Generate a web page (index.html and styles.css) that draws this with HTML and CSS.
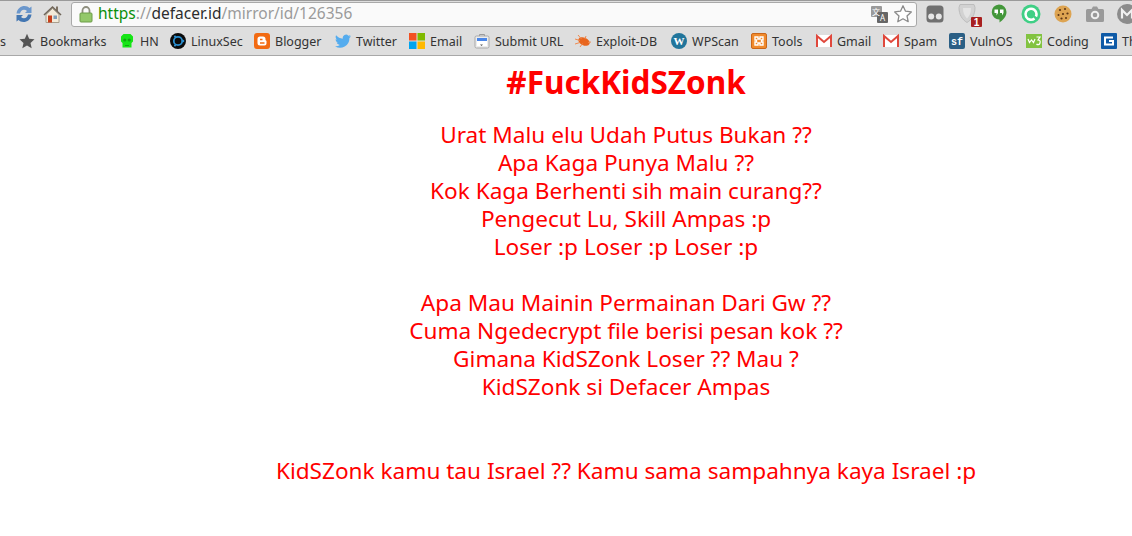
FILE: index.html
```html
<!DOCTYPE html>
<html lang="id">
<head>
  <meta charset="UTF-8" />
  <title>#FuckKidSZonk</title>
  <link rel="stylesheet" href="styles.css">
</head>
<body>
  <div class="toolbar">
    <span class="nav-btn">
      <svg width="18" height="18" viewBox="0 0 18 18">
        <path d="M1.500 8.500C2 3.500 6 1 9.500 1c2.200 0 3.800.8 5 2L16.500 1.500V8h-6.500l2-2c-.8-.8-1.800-1.200-3-1.200-2 0-3.500 1.400-4 3.700z" fill="#6b97cc"/>
        <path d="M16.500 9.500c-.5 5-4.500 7.500-8 7.500-2.200 0-3.800-.8-5-2L1.500 16.500V10H8l-2 2c.8.800 1.800 1.200 3 1.200 2 0 3.500-1.400 4-3.700z" fill="#4477b2"/>
      </svg>
    </span>
    <span class="nav-btn">
      <svg width="19" height="19" viewBox="0 0 19 19">
        <path d="M3 9.500V17.500h13V9.500L9.500 3.500z" fill="#f2ead9" stroke="#a89f8e"/>
        <rect x="13" y="1.500" width="2" height="4.500" fill="#7c7163"/>
        <path d="M1 10l8.500-8L18 10" fill="none" stroke="#6f6558" stroke-width="1.600"/>
        <rect x="5" y="10.500" width="4" height="7" fill="#c8401c"/>
        <rect x="10.500" y="10.500" width="3.500" height="3.500" fill="#7f9db8"/>
      </svg>
    </span>
    <div class="url-box">
      <svg class="lock" width="14" height="17" viewBox="0 0 14 17">
        <path d="M3.500 8V4.500a3.500 3.500 0 0 1 7 0V8" fill="none" stroke="#8f8f7f" stroke-width="1.800"/>
        <rect x="1" y="7" width="12" height="9" rx="1" fill="#93c86a" stroke="#6c9c48"/>
      </svg>
      <span class="url"><span class="url-https">https</span><span class="url-path">://</span><span class="url-host">defacer.id</span><span class="url-path">/mirror/id/126356</span></span>
      <svg class="translate" width="17" height="17" viewBox="0 0 17 17">
        <rect x="0" y="0" width="11" height="11" rx="1" fill="#9a9a9a"/>
        <rect x="6" y="6" width="11" height="11" rx="1" fill="#666"/>
        <text x="5" y="8.500" class="translate-zh">文</text>
        <text x="11.500" y="15" class="translate-a">A</text>
      </svg>
      <svg width="20" height="20" viewBox="0 0 20 20">
        <path d="M10 1.800l2.500 5.400 5.800.7-4.300 4 1.200 5.800L10 14.800l-5.200 2.900L6 11.900l-4.300-4 5.800-.7z" fill="#fff" stroke="#8a8a8a" stroke-width="1.300" stroke-linejoin="round"/>
      </svg>
    </div>
    <div class="extensions">
      <span class="ext-btn">
        <svg width="18" height="18" viewBox="0 0 18 18">
          <rect x="0.500" y="0.500" width="17" height="17" rx="3.500" fill="#707070"/>
          <circle cx="5.200" cy="11.500" r="3" fill="#e6e6e6"/>
          <circle cx="12.800" cy="11.500" r="3" fill="#e6e6e6"/>
        </svg>
      </span>
      <span class="ext-btn">
        <svg width="30" height="26" viewBox="0 0 30 26">
          <path d="M8 3.500h14l1 3c0 7-3 12-8 15-5-3-8-8-8-15z" fill="#d2d2d2" stroke="#bdbdbd"/>
          <path d="M11 7h8c0 5-1.500 8-4 10.500C12.500 15 11 12 11 7z" fill="#e4e4e4"/>
          <rect x="19" y="16" width="11" height="10" rx="1" fill="#a81f1f"/>
          <text x="24.500" y="25" class="ext-badge">1</text>
        </svg>
      </span>
      <span class="ext-btn">
        <svg width="16" height="20" viewBox="0 0 16 20">
          <path d="M8 0.500a7.500 7.500 0 0 1 7.500 7.500c0 4.500-3.500 8-7 10.500V15.500A7.500 7.500 0 0 1 8 .500z" fill="#43973a"/>
          <rect x="3.500" y="5.500" width="3.500" height="3.500" fill="#fff"/>
          <rect x="9" y="5.500" width="3.500" height="3.500" fill="#fff"/>
          <path d="M5.500 9h1.500l-1.500 2.500zM11 9h1.500L11 11.500z" fill="#fff"/>
        </svg>
      </span>
      <span class="ext-btn">
        <svg width="20" height="20" viewBox="0 0 20 20">
          <circle cx="10" cy="10" r="9.500" fill="#3fcf85"/>
          <path d="M13.500 14.500A5.500 5.500 0 1 1 15.500 10c0 1-.2 1.800-.6 2.500" fill="none" stroke="#fff" stroke-width="2.600"/>
        </svg>
      </span>
      <span class="ext-btn">
        <svg width="18" height="18" viewBox="0 0 18 18">
          <circle cx="9" cy="9" r="8.500" fill="#dda452"/>
          <circle cx="6" cy="5" r="1.100" fill="#5c3415"/>
          <circle cx="11" cy="4" r="1" fill="#5c3415"/>
          <circle cx="13.500" cy="8.500" r="1.100" fill="#5c3415"/>
          <circle cx="9" cy="9" r="1.100" fill="#5c3415"/>
          <circle cx="4.500" cy="10" r="1" fill="#5c3415"/>
          <circle cx="7.500" cy="13.500" r="1.100" fill="#5c3415"/>
          <circle cx="12" cy="13" r="1" fill="#5c3415"/>
        </svg>
      </span>
      <span class="ext-btn">
        <svg width="18" height="16" viewBox="0 0 18 16">
          <path d="M1.500 3h4l1.500-2.500h4L12.500 3h4A1.500 1.500 0 0 1 18 4.500v10a1.500 1.500 0 0 1-1.500 1.500h-15A1.500 1.500 0 0 1 0 14.500v-10A1.500 1.500 0 0 1 1.500 3z" fill="#9a9a9a"/>
          <circle cx="9" cy="9" r="3.300" fill="none" stroke="#efefef" stroke-width="2"/>
        </svg>
      </span>
      <span class="ext-btn">
        <svg width="20" height="20" viewBox="0 0 20 20">
          <circle cx="10" cy="10" r="10" fill="#8c8c8c"/>
          <path d="M5 14.500V6l5 5 5-5v8.500" fill="none" stroke="#f0f0f0" stroke-width="2.200"/>
        </svg>
      </span>
    </div>
  </div>

  <div class="bookmarks">
    <span class="bm bm-cut">s</span>
    <span class="bm bm-star">
      <svg width="16" height="16" viewBox="0 0 16 16"><path d="M8 .8l2.200 5 5.300.5-4 3.600 1.200 5.300L8 12.400l-4.700 2.800 1.200-5.300-4-3.600 5.300-.5z" fill="#555"/></svg>
      Bookmarks
    </span>
    <span class="bm bm-hn">
      <svg width="16" height="16" viewBox="0 0 16 16">
        <path d="M4.500 1h7l2.500 2.500v5L12.500 10v4.500h-9V10L2 8.500v-5z" fill="#16e516"/>
        <circle cx="5.800" cy="7" r="1.600" fill="#0fa70f"/>
        <circle cx="10.200" cy="7" r="1.600" fill="#0fa70f"/>
        <path d="M6 12.500h4" stroke="#0fa70f"/>
      </svg>
      HN
    </span>
    <span class="bm bm-linuxsec">
      <svg width="16" height="16" viewBox="0 0 16 16">
        <circle cx="8" cy="8" r="8" fill="#0b0b0b"/>
        <circle cx="8" cy="8" r="4.200" fill="none" stroke="#2b8fd0" stroke-width="1.800"/>
        <circle cx="13" cy="8" r="1.300" fill="#2b8fd0"/>
        <circle cx="5" cy="3.500" r="1.100" fill="#2b8fd0"/>
        <circle cx="5" cy="12.500" r="1.100" fill="#2b8fd0"/>
      </svg>
      LinuxSec
    </span>
    <span class="bm bm-blogger">
      <svg width="16" height="16" viewBox="0 0 16 16">
        <rect width="16" height="16" rx="3" fill="#f26a12"/>
        <path d="M6 3.500h3a2.500 2.500 0 0 1 2.500 2.500v1l1 1v2.500a2 2 0 0 1-2 2H6a2.500 2.500 0 0 1-2.500-2.500V6A2.500 2.500 0 0 1 6 3.500z" fill="#fff"/>
        <path d="M6 6.500h2.500M6 10h4.500" stroke="#f26a12" stroke-width="1.300"/>
      </svg>
      Blogger
    </span>
    <span class="bm bm-twitter">
      <svg width="16" height="16" viewBox="0 0 16 16">
        <path d="M16 3.200c-.6.3-1.200.4-1.900.5.700-.4 1.200-1 1.400-1.800-.6.4-1.300.6-2.100.8A3.300 3.300 0 0 0 7.800 5.700C5.100 5.600 2.700 4.300 1.100 2.300c-.9 1.500-.4 3.400 1 4.400-.5 0-1-.2-1.500-.4 0 1.600 1.100 3 2.600 3.300-.5.100-1 .1-1.500 0 .4 1.300 1.600 2.200 3.100 2.300A6.600 6.600 0 0 1 0 13.200 9.300 9.300 0 0 0 14.400 5c.6-.5 1.200-1.100 1.600-1.800z" fill="#55acee"/>
      </svg>
      Twitter
    </span>
    <span class="bm bm-email">
      <svg width="16" height="16" viewBox="0 0 16 16">
        <rect width="7.500" height="7.500" fill="#f25022"/>
        <rect x="8.500" width="7.500" height="7.500" fill="#7fba00"/>
        <rect y="8.500" width="7.500" height="7.500" fill="#00a4ef"/>
        <rect x="8.500" y="8.500" width="7.500" height="7.500" fill="#ffb900"/>
      </svg>
      Email
    </span>
    <span class="bm bm-submit">
      <svg width="16" height="16" viewBox="0 0 16 16">
        <path d="M5.500 3V1.500h5V3" fill="none" stroke="#9a9a9a"/>
        <rect x="1" y="3" width="14" height="12" rx="1.500" fill="#ececec" stroke="#a8a8a8"/>
        <rect x="3" y="5" width="10" height="3" fill="#4a86e8"/>
        <rect x="3" y="8" width="10" height="5" fill="#fff"/>
        <path d="M9 8.500v3l-1.500 1.500-1.500-1.500h3" fill="#555"/>
      </svg>
      Submit URL
    </span>
    <span class="bm bm-exploit">
      <svg width="16" height="16" viewBox="0 0 16 16">
        <ellipse cx="9" cy="8.500" rx="6" ry="3.800" transform="rotate(25 9 8.500)" fill="#e8651d"/>
        <path d="M0 6l5 1.500M3 2l3.500 4M0 11l5-1.500M5 14l2.500-3.500M11 3l-1 3M16 9l-3 .5" stroke="#ee8a50"/>
      </svg>
      Exploit-DB
    </span>
    <span class="bm bm-wpscan">
      <svg width="16" height="16" viewBox="0 0 16 16">
        <circle cx="8" cy="8" r="8" fill="#21759b"/>
        <text x="8" y="12" class="bm-wp">W</text>
      </svg>
      WPScan
    </span>
    <span class="bm bm-tools">
      <svg width="16" height="16" viewBox="0 0 16 16">
        <rect x="0.500" y="0.500" width="15" height="15" rx="1.500" fill="#f08a2c" stroke="#c9661a"/>
        <path d="M4 4h3v2h2V4h3v3h-1.500v2H12v3H9v-2H7v2H4V9h1.500V7H4z" fill="none" stroke="#fff" stroke-width="1.400"/>
      </svg>
      Tools
    </span>
    <span class="bm bm-gmail">
      <svg width="16" height="16" viewBox="0 0 16 16">
        <rect y="2" width="16" height="12" fill="#fff"/>
        <path d="M1 14V3l7 6 7-6v11" fill="none" stroke="#e0483c" stroke-width="2"/>
      </svg>
      Gmail
    </span>
    <span class="bm bm-spam">
      <svg width="16" height="16" viewBox="0 0 16 16">
        <rect y="2" width="16" height="12" fill="#fff"/>
        <path d="M1 14V3l7 6 7-6v11" fill="none" stroke="#e0483c" stroke-width="2"/>
      </svg>
      Spam
    </span>
    <span class="bm bm-vulnos">
      <svg width="16" height="16" viewBox="0 0 16 16">
        <rect width="16" height="16" rx="2" fill="#2b5f85"/>
        <text x="8" y="12" class="bm-sf">sf</text>
      </svg>
      VulnOS
    </span>
    <span class="bm bm-coding">
      <svg width="16" height="14" viewBox="0 0 16 14">
        <rect width="16" height="14" fill="#82c341"/>
        <path d="M2 5l1.500 3.500L5.500 6l2 2.500L9 5M10.500 3h3.500L12 6c2 0 2.500 1 2 3s-2.500 2-3.500 1" fill="none" stroke="#fff" stroke-width="1.200"/>
      </svg>
      Coding
    </span>
    <span class="bm bm-last">
      <svg width="16" height="16" viewBox="0 0 16 16">
        <rect width="16" height="16" rx="1" fill="#0e5aa7"/>
        <path d="M12 4.500H4v7h8V8H8" fill="none" stroke="#fff" stroke-width="2"/>
      </svg>
      Th
    </span>
  </div>

  <main class="pesan">
    <h1>#FuckKidSZonk</h1>
    <p>
      Urat Malu elu Udah Putus Bukan ??<br>
      Apa Kaga Punya Malu ??<br>
      Kok Kaga Berhenti sih main curang??<br>
      Pengecut Lu, Skill Ampas :p<br>
      Loser :p Loser :p Loser :p<br>
      <br>
      Apa Mau Mainin Permainan Dari Gw ??<br>
      Cuma Ngedecrypt file berisi pesan kok ??<br>
      Gimana KidSZonk Loser ?? Mau ?<br>
      KidSZonk si Defacer Ampas<br>
      <br>
      <br>
      KidSZonk kamu tau Israel ?? Kamu sama sampahnya kaya Israel :p
    </p>
  </main>
</body>
</html>
```

FILE: styles.css
```css
* {
  box-sizing: border-box;
}
html, body {
  height: 100%;
}
body {
  margin: 0;
  background-color: white;
  font-family: "Noto Sans", sans-serif;
  overflow: hidden;
}
svg {
  display: block;
  flex: none;
}

/* barra do navegador */
.toolbar {
  display: flex;
  align-items: center;
  height: 27px;
  padding-left: 9px;
  background-color: #dedede;
  border-top: 1px solid #9a9a9a;
}
.nav-btn {
  display: flex;
  flex: none;
  justify-content: center;
  width: 29px;
}
.url-box {
  display: flex;
  flex: none;
  align-items: center;
  gap: 5px;
  width: 846px;
  height: 25px;
  margin-left: 4px;
  padding: 0 3px 0 7px;
  background-color: #fafafa;
  border: 1px solid #a9a9a9;
  border-radius: 3px;
}
.url {
  flex: 1;
  margin-top: -2px;
  font-size: 15.5px;
  white-space: nowrap;
}
.url-https {
  color: #0b8f0b;
}
.url-host {
  color: #2d2d2d;
}
.url-path {
  color: #9b9b9b;
}
.translate-zh {
  font-family: "Noto Sans CJK SC", sans-serif;
  font-size: 8px;
  fill: white;
  text-anchor: middle;
}
.translate-a {
  font-size: 8px;
  fill: white;
  text-anchor: middle;
}
.extensions {
  display: flex;
  flex: none;
  margin-left: 2px;
}
.ext-btn {
  display: flex;
  align-items: center;
  justify-content: center;
  width: 32px;
  height: 26px;
}
.ext-badge {
  font-family: "Liberation Sans", sans-serif;
  font-size: 10px;
  font-weight: 700;
  fill: white;
  text-anchor: middle;
}

/* favoritos */
.bookmarks {
  display: flex;
  align-items: center;
  height: 29px;
  background-color: #dedede;
  border-bottom: 1px solid #a8a8a8;
  font-size: 12.5px;
  color: #333;
  overflow: hidden;
  white-space: nowrap;
}
.bm {
  display: flex;
  align-items: center;
  flex: none;
  gap: 5px;
}
.bm-cut { width: 19px; }
.bm-star { width: 100px; }
.bm-hn { width: 51px; }
.bm-linuxsec { width: 84px; }
.bm-blogger { width: 81px; }
.bm-twitter { width: 74px; }
.bm-email { width: 65px; }
.bm-submit { width: 101px; }
.bm-exploit { width: 96px; }
.bm-wpscan { width: 80px; }
.bm-tools { width: 65px; }
.bm-gmail { width: 67px; }
.bm-spam { width: 66px; }
.bm-vulnos { width: 77px; }
.bm-coding { width: 75px; }
.bm-wp {
  font-family: "Liberation Serif", serif;
  font-size: 11px;
  font-weight: 700;
  fill: white;
  text-anchor: middle;
}
.bm-sf {
  font-family: "Liberation Mono", monospace;
  font-size: 10px;
  font-weight: 700;
  fill: white;
  text-anchor: middle;
}

/* mensagem */
.pesan {
  margin-left: 120px;
  color: #ff0000;
  text-align: center;
}
.pesan h1 {
  margin: 0;
  padding-top: 8px;
  font-size: 31.5px;
  line-height: 36px;
  font-weight: 700;
}
.pesan p {
  margin: 21px 0 0;
  font-size: 22.6px;
  line-height: 28px;
}
```
